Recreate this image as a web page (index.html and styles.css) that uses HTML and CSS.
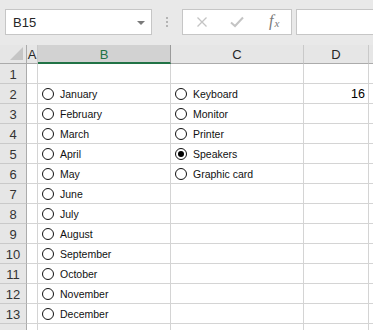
FILE: index.html
```html
<!DOCTYPE html>
<html>
<head>
<meta charset="utf-8">
<link rel="stylesheet" href="styles.css">
</head>
<body>
<div class="toolbar">
  <div class="namebox"><span class="ref">B15</span><span class="dd"></span></div>
  <div class="dots"><i></i><i></i><i></i></div>
  <div class="fxbox">
    <svg class="ic" width="12" height="12" viewBox="0 0 12 12"><path d="M1.5 1.5 L10.5 10.5 M10.5 1.5 L1.5 10.5" stroke="#c4c4c4" stroke-width="1.3" fill="none"/></svg>
    <svg class="ic" width="14" height="12" viewBox="0 0 14 12"><path d="M1 6.5 L5 10 L13 1.5" stroke="#c4c4c4" stroke-width="2" fill="none"/></svg>
    <span class="fx">f<sub>x</sub></span>
  </div>
  <div class="formula"></div>
</div>
<div class="sheet">
  <div class="corner"><span class="tri"></span></div>
  <div class="ch">A</div>
  <div class="ch sel">B</div>
  <div class="ch">C</div>
  <div class="ch">D</div>
  <div class="ch last"></div>

  <div class="rh">1</div><div class="c"></div><div class="c"></div><div class="c"></div><div class="c"></div><div class="c"></div>
  <div class="rh">2</div><div class="c"></div><div class="c"><span class="r"></span>January</div><div class="c"><span class="r"></span>Keyboard</div><div class="c num">16</div><div class="c"></div>
  <div class="rh">3</div><div class="c"></div><div class="c"><span class="r"></span>February</div><div class="c"><span class="r"></span>Monitor</div><div class="c"></div><div class="c"></div>
  <div class="rh">4</div><div class="c"></div><div class="c"><span class="r"></span>March</div><div class="c"><span class="r"></span>Printer</div><div class="c"></div><div class="c"></div>
  <div class="rh">5</div><div class="c"></div><div class="c"><span class="r"></span>April</div><div class="c"><span class="r on"></span>Speakers</div><div class="c"></div><div class="c"></div>
  <div class="rh">6</div><div class="c"></div><div class="c"><span class="r"></span>May</div><div class="c"><span class="r"></span>Graphic card</div><div class="c"></div><div class="c"></div>
  <div class="rh">7</div><div class="c"></div><div class="c"><span class="r"></span>June</div><div class="c"></div><div class="c"></div><div class="c"></div>
  <div class="rh">8</div><div class="c"></div><div class="c"><span class="r"></span>July</div><div class="c"></div><div class="c"></div><div class="c"></div>
  <div class="rh">9</div><div class="c"></div><div class="c"><span class="r"></span>August</div><div class="c"></div><div class="c"></div><div class="c"></div>
  <div class="rh">10</div><div class="c"></div><div class="c"><span class="r"></span>September</div><div class="c"></div><div class="c"></div><div class="c"></div>
  <div class="rh">11</div><div class="c"></div><div class="c"><span class="r"></span>October</div><div class="c"></div><div class="c"></div><div class="c"></div>
  <div class="rh">12</div><div class="c"></div><div class="c"><span class="r"></span>November</div><div class="c"></div><div class="c"></div><div class="c"></div>
  <div class="rh">13</div><div class="c"></div><div class="c"><span class="r"></span>December</div><div class="c"></div><div class="c"></div><div class="c"></div>
  <div class="rh"></div><div class="c"></div><div class="c"></div><div class="c"></div><div class="c"></div><div class="c"></div>
</div>
</body>
</html>
```
FILE: styles.css
```css
html, body {
  margin: 0;
  padding: 0;
  background: #ffffff;
  overflow: hidden;
  width: 373px;
  height: 330px;
}
body {
  font-family: "Liberation Sans", Arial, sans-serif;
}
.toolbar {
  height: 45px;
  background: #e9e9e9;
  display: flex;
  align-items: flex-start;
  padding-top: 9px;
  box-sizing: border-box;
}
.namebox {
  margin-left: 5px;
  width: 147px;
  height: 26px;
  box-sizing: border-box;
  background: #fff;
  border: 1px solid #c6c6c6;
  display: flex;
  align-items: center;
  justify-content: space-between;
  padding: 0 6px 0 7px;
}
.ref {
  font-size: 13px;
  color: #262626;
}
.dd {
  width: 0;
  height: 0;
  border-left: 4px solid transparent;
  border-right: 4px solid transparent;
  border-top: 4px solid #7a7a7a;
  margin-top: 1px;
}
.dots {
  width: 30px;
  height: 26px;
  display: flex;
  flex-direction: column;
  align-items: center;
  justify-content: center;
  gap: 2px;
}
.dots i {
  width: 2px;
  height: 2px;
  background: #b4b4b4;
}
.fxbox {
  width: 110px;
  height: 26px;
  box-sizing: border-box;
  background: #fff;
  border: 1px solid #c6c6c6;
  display: flex;
  align-items: center;
  padding-left: 13px;
  gap: 0;
}
.fxbox .ic:first-child {
  margin-right: 22px;
}
.fxbox .ic:nth-child(2) {
  margin-right: 25px;
}
.fx {
  font-family: "Liberation Serif", "Times New Roman", serif;
  font-style: italic;
  font-size: 16px;
  color: #7a7a7a;
  line-height: 1;
  margin-top: -2px;
}
.fx sub {
  font-size: 11px;
  vertical-align: -1px;
  margin-left: 1px;
}
.formula {
  margin-left: 4px;
  flex: 1;
  height: 26px;
  box-sizing: border-box;
  background: #fff;
  border: 1px solid #c6c6c6;
  border-right: none;
}
.sheet {
  display: grid;
  grid-template-columns: 27px 11px 133px 133px 65px 1fr;
  grid-template-rows: 19px repeat(14, 20px);
}
.corner, .ch {
  background: #e6e6e6;
  border-right: 1px solid #c9c9c9;
  border-bottom: 1px solid #ababab;
  box-sizing: border-box;
}
.corner {
  position: relative;
  border-right: 1px solid #ababab;
}
.tri {
  position: absolute;
  right: 3px;
  bottom: 3px;
  width: 0;
  height: 0;
  border-left: 13px solid transparent;
  border-bottom: 13px solid #c5c5c5;
}
.ch {
  font-size: 13px;
  color: #262626;
  display: flex;
  align-items: center;
  justify-content: center;
  padding-top: 1px;
}
.ch.sel {
  background: #d2d2d2;
  color: #217346;
  border-bottom: 2px solid #217346;
  border-right: 1px solid #9b9b9b;
}
.ch.last {
  border-right: none;
}
.rh {
  background: #e6e6e6;
  border-right: 1px solid #ababab;
  border-bottom: 1px solid #c9c9c9;
  box-sizing: border-box;
  font-size: 13px;
  color: #333;
  display: flex;
  align-items: center;
  justify-content: center;
  padding-top: 1px;
}
.c {
  border-right: 1px solid #d4d4d4;
  border-bottom: 1px solid #d4d4d4;
  box-sizing: border-box;
  display: flex;
  align-items: center;
  padding-left: 4px;
  font-size: 10.5px;
  color: #111;
  white-space: nowrap;
}
.c.num {
  justify-content: flex-end;
  padding-right: 3px;
  font-size: 12.5px;
  color: #000;
}
.r {
  width: 12px;
  height: 12px;
  box-sizing: border-box;
  border: 1px solid #111;
  border-radius: 50%;
  margin-right: 6px;
  flex: none;
  display: flex;
  align-items: center;
  justify-content: center;
}
.r.on::after {
  content: "";
  width: 6px;
  height: 6px;
  border-radius: 50%;
  background: #000;
}
```
